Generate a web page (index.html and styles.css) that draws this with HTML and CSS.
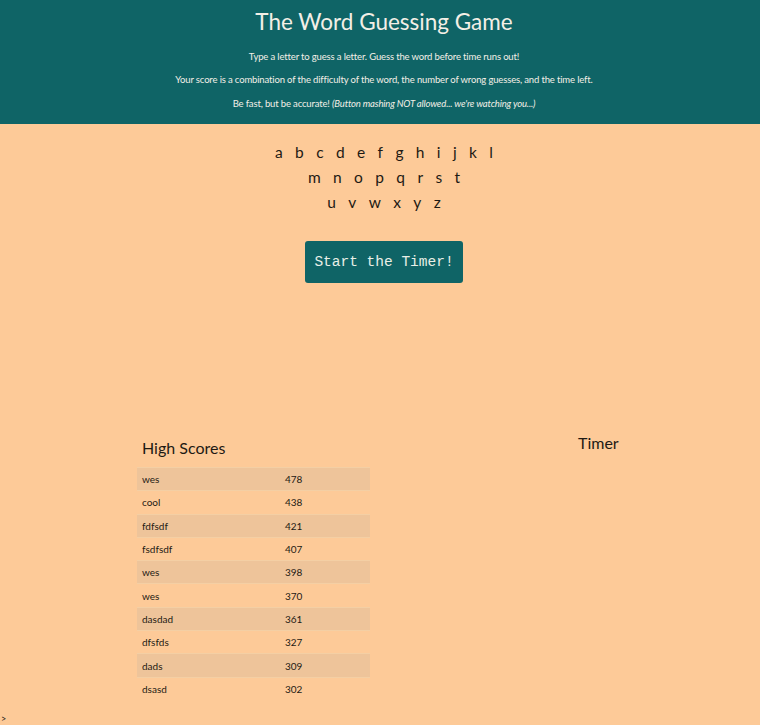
FILE: index.html
```html
<!DOCTYPE html>
<html>
<head>
<meta charset="utf-8">
<link rel="stylesheet" href="styles.css">
</head>
<body>
<header class="header">
  <h1 class="title">The Word Guessing Game</h1>
  <p class="intro">Type a letter to guess a letter. Guess the word before time runs out!</p>
  <p class="intro">Your score is a combination of the difficulty of the word, the number of wrong guesses, and the time left.</p>
  <p class="intro">Be fast, but be accurate! <em>(Button mashing NOT allowed... we're watching you...)</em></p>
</header>
<main class="main">
  <div class="letters">
    <div class="letter-row"><span class="letter">a</span><span class="letter">b</span><span class="letter">c</span><span class="letter">d</span><span class="letter">e</span><span class="letter">f</span><span class="letter">g</span><span class="letter">h</span><span class="letter">i</span><span class="letter">j</span><span class="letter">k</span><span class="letter">l</span></div>
    <div class="letter-row"><span class="letter">m</span><span class="letter">n</span><span class="letter">o</span><span class="letter">p</span><span class="letter">q</span><span class="letter">r</span><span class="letter">s</span><span class="letter">t</span></div>
    <div class="letter-row"><span class="letter">u</span><span class="letter">v</span><span class="letter">w</span><span class="letter">x</span><span class="letter">y</span><span class="letter">z</span></div>
  </div>
  <div class="start-wrap"><button class="start-btn">Start the Timer!</button></div>
  <div class="bottom">
    <section class="scores">
      <h2 class="scores-title">High Scores</h2>
      <table class="score-table">
        <tr><td>wes</td><td>478</td></tr>
        <tr><td>cool</td><td>438</td></tr>
        <tr><td>fdfsdf</td><td>421</td></tr>
        <tr><td>fsdfsdf</td><td>407</td></tr>
        <tr><td>wes</td><td>398</td></tr>
        <tr><td>wes</td><td>370</td></tr>
        <tr><td>dasdad</td><td>361</td></tr>
        <tr><td>dfsfds</td><td>327</td></tr>
        <tr><td>dads</td><td>309</td></tr>
        <tr><td>dsasd</td><td>302</td></tr>
      </table>
    </section>
    <section class="timer">
      <h2 class="timer-title">Timer</h2>
    </section>
  </div>
  <div class="stray">&gt;</div>
</main>
</body>
</html>
```
FILE: styles.css
```css
* { box-sizing: border-box; }
html, body { margin: 0; padding: 0; }
body {
  background: #fdca98;
  font-family: "Lato", "Open Sans", sans-serif;
  color: #1e1a14;
}
.header {
  background: #0f6466;
  color: #f3efe6;
  text-align: center;
  padding: 6px 0 10px 8px;
  height: 124px;
}
.title {
  margin: 0 0 7px;
  font-size: 22.5px;
  font-weight: 400;
  line-height: 32px;
}
.intro {
  margin: 0;
  font-size: 9.5px;
  letter-spacing: -0.15px;
  line-height: 23.4px;
}
.main { padding-top: 17px; }
.letters { text-align: center; padding-left: 8px; }
.letter-row {
  display: flex;
  justify-content: center;
  height: 25px;
  line-height: 22px;
  font-size: 15.5px;
}
.letter {
  padding: 0 6.2px;
  text-align: center;
}
.start-wrap {
  display: flex;
  justify-content: center;
  margin-top: 25px;
  padding-left: 8px;
}
.start-btn {
  background: #0f6466;
  color: #e9efe7;
  border: none;
  border-radius: 3px;
  width: 158px;
  height: 42px;
  font-family: "Liberation Mono", "DejaVu Sans Mono", monospace;
  font-size: 14.5px;
  padding: 0;
}
.bottom {
  display: flex;
  margin-top: 155px;
  padding-left: 137px;
}
.scores { width: 233px; }
.scores-title {
  margin: 0 0 9px 5px;
  font-size: 16px;
  font-weight: 400;
  line-height: 20px;
}
.score-table {
  width: 233px;
  border-collapse: collapse;
  font-size: 10px;
}
.score-table td {
  height: 23.3px;
  padding: 0 5px;
  border-top: 1px solid #f4cfa4;
}
.score-table tr:nth-child(odd) td { background: #eec49a; }
.score-table td:first-child { width: 143px; }
.timer { margin-left: 208px; margin-top: -5px; }
.timer-title {
  margin: 0;
  font-size: 16px;
  font-weight: 400;
  line-height: 20px;
}
.stray {
  font-size: 9px;
  line-height: 10px;
  margin-top: 14px;
  padding-left: 1px;
}
```
